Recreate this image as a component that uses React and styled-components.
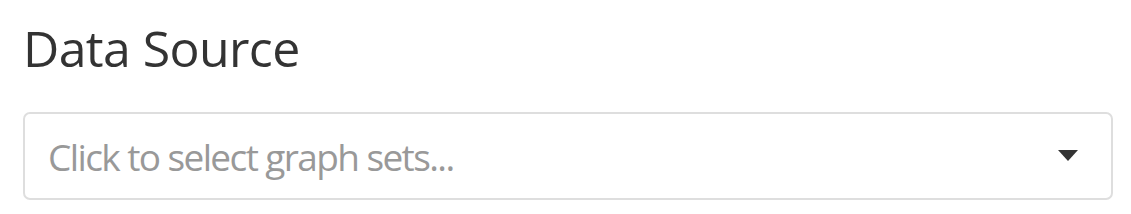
import React from "react";
import styled, { createGlobalStyle } from "styled-components";

const Global = createGlobalStyle`
  html, body { margin: 0; padding: 0; background: #fff; }
  body { font-family: "Open Sans", "Noto Sans", sans-serif; }
`;

const Panel = styled.div`
  padding: 14px 18px 0 23px;
  display: flex;
  flex-direction: column;
  gap: 30px;
`;

const Heading = styled.h2`
  margin: 0;
  font-size: 50px;
  font-weight: 400;
  letter-spacing: -0.6px;
  line-height: 68px;
  color: #333;
`;

const Select = styled.div`
  height: 84px;
  border: 2px solid #dedede;
  border-radius: 7px;
  display: flex;
  align-items: center;
  justify-content: space-between;
  padding: 0 33px 0 23px;
  cursor: pointer;
`;

const Placeholder = styled.span`
  font-size: 37px;
  letter-spacing: -1.6px;
  color: #999;
`;

const Caret = styled.svg`
  width: 20px;
  height: 11px;
  display: block;
  margin-top: -2px;
`;

export default function App() {
  return (
    <>
      <Global />
      <Panel>
        <Heading>Data Source</Heading>
        <Select>
          <Placeholder>Click to select graph sets...</Placeholder>
          <Caret viewBox="0 0 20 11">
            <path d="M0 0 L20 0 L10 11 Z" fill="#333" />
          </Caret>
        </Select>
      </Panel>
    </>
  );
}
